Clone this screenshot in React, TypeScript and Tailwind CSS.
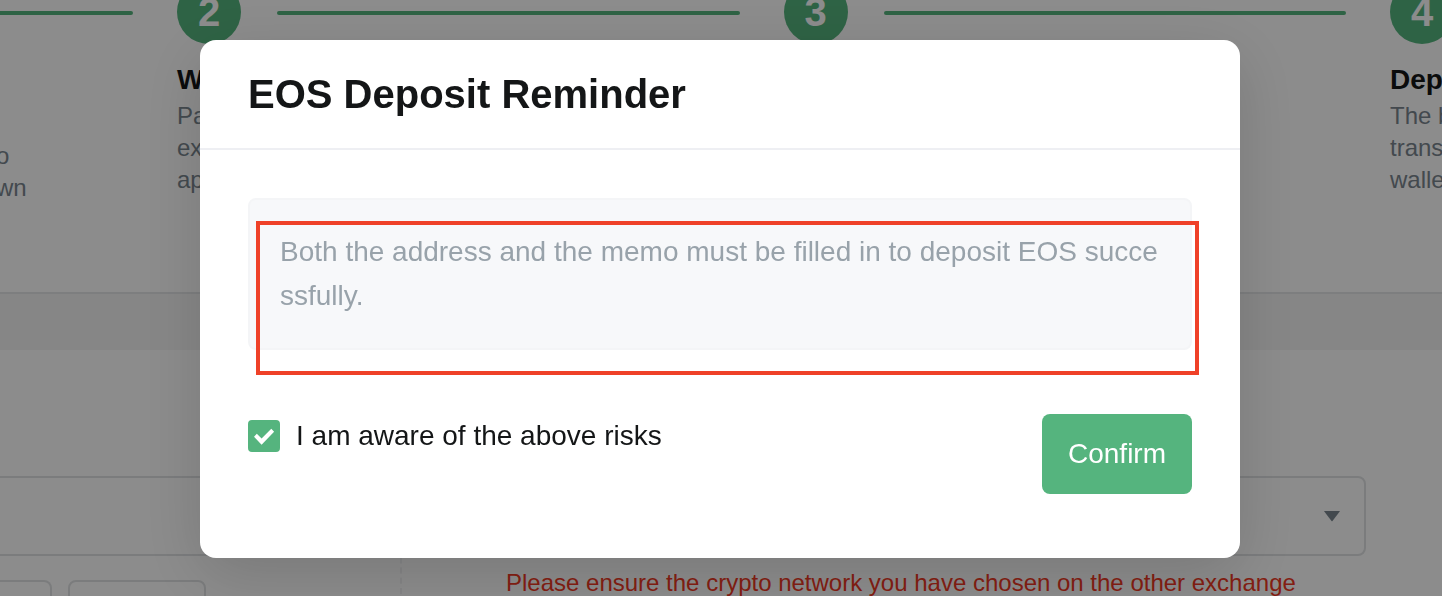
import { useState } from 'react';

type StepProps = {
  num: number;
  title: string;
  lines: string[];
  last?: boolean;
};

const Step = ({ num, title, lines, last = false }: StepProps) => (
  <li className={last ? 'w-[52px] shrink-0' : 'min-w-0 flex-1'}>
    <div className="flex items-center">
      <div className="flex size-16 shrink-0 items-center justify-center rounded-full bg-[#55b47e] text-[40px] font-bold leading-none text-white">
        {num}
      </div>
      {!last && <div className="ml-9 mr-11 mt-0.5 h-1 flex-1 rounded-full bg-[#55b47e]" />}
    </div>
    <h3 className="mt-4 h-10 text-[28px] font-bold leading-10 text-[#141617]">{title}</h3>
    <p className="whitespace-pre text-2xl text-[#7a868f]">{lines.join('\n')}</p>
  </li>
);

const Steps = () => (
  <section className="-mt-5 border-b-2 border-[#e4e6e8] pb-22">
    <ol className="flex">
      {/* The first step is scrolled out on the left, only its tail is visible */}
      <li className="w-[177px] shrink-0">
        <div className="flex h-16 items-center">
          <div className="mr-11 mt-0.5 h-1 flex-1 rounded-r-full bg-[#55b47e]" />
        </div>
        <p className="-ml-1 mt-24 whitespace-pre text-2xl text-[#7a868f]">{'o\nwn'}</p>
      </li>
      <Step num={2} title="W" lines={['Pa', 'ex', 'ap']} />
      <Step num={3} title="" lines={[]} />
      <Step num={4} title="Dep" lines={['The b', 'trans', 'walle']} last />
    </ol>
  </section>
);

const DepositForm = () => (
  <section className="flex pt-[126px]">
    <div className="h-60 w-[402px] shrink-0 border-r-2 border-dashed border-[#f1f2f4]">
      <input
        aria-label="Coin"
        className="block h-20 w-[370px] rounded-r-lg border-2 border-l-0 border-[#e0e2e4] px-6 text-[28px]"
      />
      <div className="mt-6 flex gap-4">
        <button aria-label="First coin" className="h-16 w-[52px] rounded-r-lg border-2 border-l-0 border-[#e0e2e4]" />
        <button aria-label="Second coin" className="h-16 w-[138px] rounded-lg border-2 border-[#e0e2e4]" />
      </div>
    </div>
    <div className="ml-[104px] mr-[76px] flex-1">
      <div className="relative">
        <select
          aria-label="Network"
          className="block h-20 w-full appearance-none rounded-lg border-2 border-[#e0e2e4] px-6 text-[28px]"
        />
        <svg className="pointer-events-none absolute right-6 top-8 size-5" viewBox="0 0 20 20" fill="#7a868f">
          <path d="M2.5 3h15q.6 0 .2.6L10.5 13q-.5.5-1 0L2.300 3.600q-.4-.6.2-.6z" />
        </svg>
      </div>
      <p className="mt-[11px] whitespace-nowrap text-2xl text-[#ef3823]">
        Please ensure the crypto network you have chosen on the other exchange
      </p>
    </div>
  </section>
);

const ReminderModal = () => {
  const [aware, setAware] = useState<boolean>(true);

  return (
    <div className="fixed inset-0 flex items-start justify-center bg-black/45 pr-0.5 pt-10">
      <div
        role="dialog"
        aria-labelledby="reminder-title"
        className="w-full max-w-[1040px] rounded-2xl bg-white shadow-[0_16px_64px_rgba(0,0,0,0.15)]"
      >
        <div className="border-b-2 border-[#eeeff3] px-12 py-[26px]">
          <h2 id="reminder-title" className="text-[40px] font-bold leading-14 text-[#141617]">
            EOS Deposit Reminder
          </h2>
        </div>
        <div className="px-12 pb-16 pt-12">
          <div className="relative">
            <p className="break-all rounded-lg border-2 border-[#f4f5f7] bg-[#f7f8fa] p-[30px] text-[28px] leading-11 text-[#98a2aa]">
              Both the address and the memo must be filled in to deposit EOS successfully.
            </p>
            {/* Highlight frame */}
            <div className="pointer-events-none absolute -bottom-[25px] -right-[7px] left-2 top-[23px] border-4 border-[#ef4128]" />
          </div>
          <div className="mt-16 flex items-start justify-between">
            <label className="flex h-11 items-center gap-4 text-[28px] text-[#141617]">
              <span className="relative size-8">
                <input
                  type="checkbox"
                  checked={aware}
                  onChange={(e) => setAware(e.target.checked)}
                  className="block size-8 appearance-none rounded border-2 border-[#55b47e] checked:bg-[#55b47e]"
                />
                {aware && (
                  <svg className="pointer-events-none absolute inset-0 size-8" viewBox="0 0 32 32" fill="#fff">
                    <path d="M6 16.700 8.800 13.800l4.800 4.700L23.300 8.800l2.800 2.900L13.600 24.800z" />
                  </svg>
                )}
              </span>
              I am aware of the above risks
            </label>
            <button
              className="h-20 w-[150px] rounded-lg bg-[#55b47e] text-[28px] text-white disabled:opacity-50"
              disabled={!aware}
            >
              Confirm
            </button>
          </div>
        </div>
      </div>
    </div>
  );
};

const App = () => {
  return (
    <div className="h-screen overflow-hidden bg-white font-['Liberation_Sans',Arial,sans-serif]">
      <Steps />
      <div className="h-14 bg-[#f5f5f5]" />
      <DepositForm />
      <ReminderModal />
    </div>
  );
};

export default App;
